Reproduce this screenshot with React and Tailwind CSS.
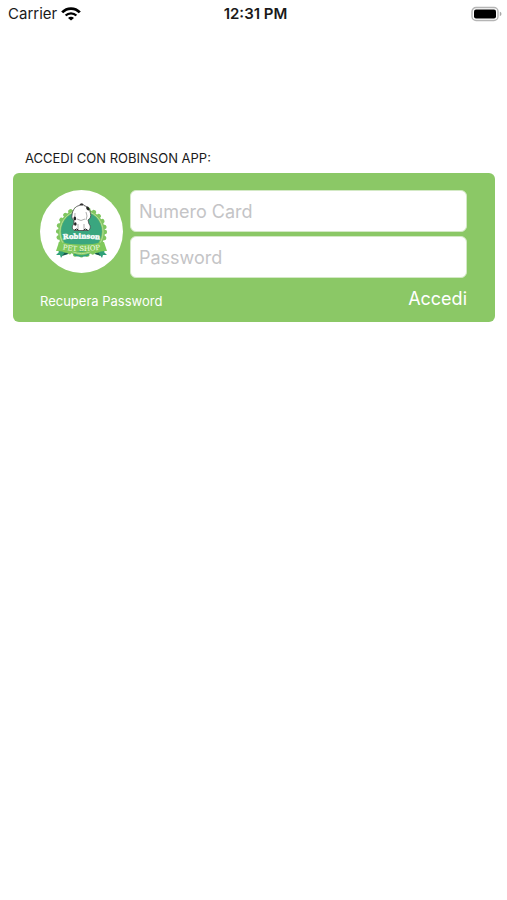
function WifiIcon() {
  return (
    <svg viewBox="0 0 20 14" className="h-[14px] w-5" fill="none" aria-hidden="true">
      <path d="M1.200 5.400C6 .3 14 .3 18.800 5.400" stroke="#000" strokeWidth="2.800" />
      <path d="M4.600 8.500c3-2.900 7.800-2.900 10.800 0" stroke="#000" strokeWidth="2.400" />
      <path d="M10 13.600 7 10.900c1.600-1.500 4.400-1.500 6 0Z" fill="#000" />
    </svg>
  );
}

function BatteryIcon() {
  return (
    <svg viewBox="0 0 32 16" className="h-4 w-8" aria-hidden="true">
      <rect x="1" y="1.5" width="26" height="13" rx="4" fill="#fff" stroke="#b5b5b5" strokeWidth="1.4" />
      <rect x="3" y="3.4" width="22" height="9.2" rx="2" fill="#000" />
      <path d="M28.8 5.8c2.2.6 2.2 3.8 0 4.4Z" fill="#a8a8a8" />
    </svg>
  );
}

function ShopLogo() {
  return (
    <svg viewBox="0 0 83 83" className="size-[83px] shrink-0" role="img" aria-label="Robinson Pet Shop">
      <circle cx="41.5" cy="41.5" r="41.5" fill="#fff" />
      <circle cx="41.5" cy="42" r="23.5" fill="#80c660" />
      <circle cx="41.5" cy="42" r="23.4" fill="none" stroke="#80c660" strokeWidth="4.4" strokeLinecap="round" strokeDasharray="0.1 6.026" />
      <circle cx="41.5" cy="42" r="21.6" fill="none" stroke="#b5df98" strokeWidth="1" />
      <circle cx="41.5" cy="41.500" r="20.4" fill="#3aa67f" />
      {/* ribbon tails */}
      <path d="m17 59 7-3 4 8-5 1-2 3-1-3-4 0 3-3Z" fill="#2fa079" />
      <path d="m66 59-7-3-4 8 5 1 2 3 1-3 4 0-3-3Z" fill="#2fa079" />
      <path d="m22 66 6-2-2-3Z M61 66l-6-2 2-3Z" fill="#18584a" />
      {/* ribbon */}
      <path d="M19 52q22.500 5 45 0l3 9q-6-.5-10 2-15.500-4-31 0-4-2.500-10-2Z" fill="#80c95b" />
      <path d="M34 64.500q7.500 3 15 0" stroke="#2fa079" strokeWidth="1.6" fill="none" />
      {/* dog */}
      <path d="M34 31c-1-2-3-3-2-6 .4-5 3.500-9 7.500-9.500 1-2 3.500-2 4.500 0 4 1 6 4 6.500 8 .7 3 0 5-2.500 6.500l1 4c2 2 1.500 5-.5 6.500H35c-3-.5-3.500-4-1.500-6Z" fill="#fff" stroke="#444" strokeWidth="0.8" />
      <path d="M35 23q-1 5 1 7M46 22q2 4 0 8M37 29q4 3 8 0M38 34v5M44 34v5" stroke="#777" strokeWidth="0.6" fill="none" />
      <path d="M39.500 14.500q2-2 4 0l-.5 1h-3Z" fill="#333" />
      <ellipse cx="47.800" cy="18.500" rx="1.400" ry="2" transform="rotate(-35 47.800 18.500)" fill="#222" />
      <ellipse cx="34.800" cy="28.500" rx="1.300" ry="1.900" fill="#222" />
      <ellipse cx="35.300" cy="34" rx="1.300" ry="1.800" fill="#222" />
      <path d="M34.500 40q2-2 4 0M43.500 40q2-2 4 0" stroke="#222" strokeWidth="1" fill="none" />
      <path id="name-arc" d="M22 49.500q19.500-2 39 0" fill="none" />
      <text fontFamily="'DejaVu Serif', serif" fontWeight="700" fontSize="7" fill="#fff" stroke="#fff" strokeWidth="0.4" textAnchor="middle">
        <textPath href="#name-arc" startOffset="50%">Robinson</textPath>
      </text>
      <path id="ribbon-arc" d="M20 59q21.500 4 43 0" fill="none" />
      <text fontFamily="'DejaVu Serif', serif" fontSize="7" fill="#f4fbe9" textAnchor="middle">
        <textPath href="#ribbon-arc" startOffset="50%">PET SHOP</textPath>
      </text>
    </svg>
  );
}

const fieldClass =
  "h-[42px] w-full min-w-0 rounded-md border border-[#d3e9c5] bg-white px-2 text-lg text-black outline-none placeholder:text-[#c4c4c6]";

export default function App() {
  return (
    <div className="min-h-screen bg-white font-['Inter','Liberation_Sans',sans-serif] text-[#1a1a1a]">
      <header className="grid h-7 grid-cols-3 items-center pr-1 pl-2 text-[15px]">
        <div className="flex items-center gap-1">
          <span>Carrier</span>
          <WifiIcon />
        </div>
        <time className="text-center font-semibold">12:31 PM</time>
        <div className="flex justify-end">
          <BatteryIcon />
        </div>
      </header>

      <main className="pt-[120px] pr-3 pl-[13px]">
        <h1 className="px-3 text-[13px] leading-5">ACCEDI CON ROBINSON APP:</h1>
        <form
          className="mt-[5px] rounded-md bg-[#8bc866] pt-[17px] pr-7 pb-[11px] pl-[27px]"
          onSubmit={(event) => event.preventDefault()}
        >
          <div className="flex gap-[7px]">
            <ShopLogo />
            <div className="flex min-w-0 flex-1 flex-col gap-1">
              <input type="text" aria-label="Numero Card" placeholder="Numero Card" className={fieldClass} />
              <input type="password" aria-label="Password" placeholder="Password" className={fieldClass} />
            </div>
          </div>
          <div className="mt-[9px] flex items-center justify-between text-white">
            <a href="#recupera" className="pt-1 text-[13px] leading-5">Recupera Password</a>
            <button type="submit" className="text-lg leading-6">Accedi</button>
          </div>
        </form>
      </main>
    </div>
  );
}
